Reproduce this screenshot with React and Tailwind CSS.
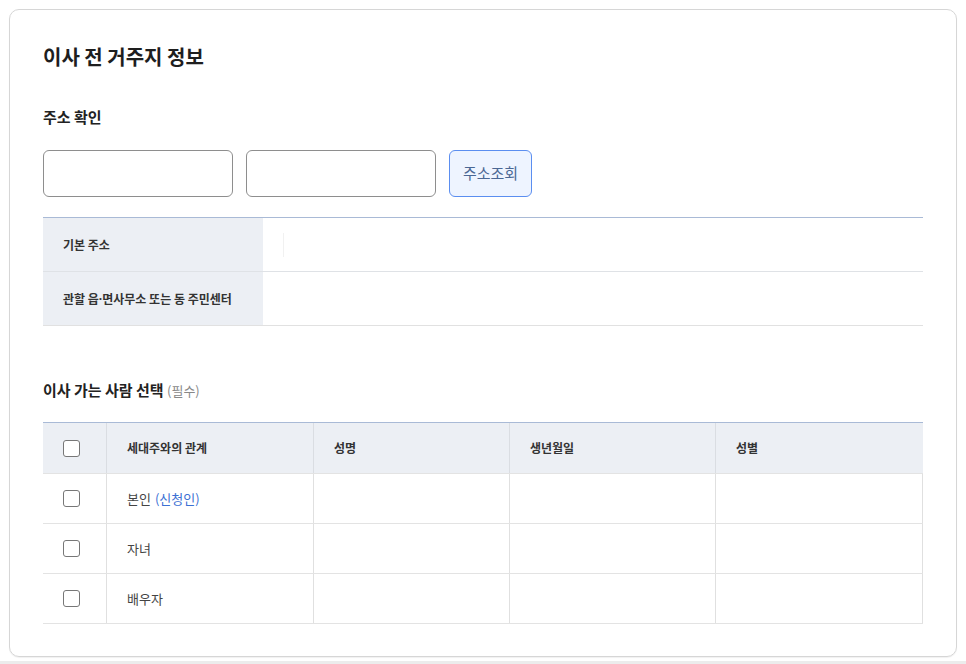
import React from 'react';

const font = { fontFamily: '"Noto Sans CJK KR", "Noto Sans", sans-serif' };

// Checkbox drawn as a plain box
const Box = () => (
  <span className="block w-[17px] h-[17px] rounded-[3px] border border-[#777] bg-white" />
);

const addressRows = [
  { label: <>관할 읍<span className="font-['Noto_Sans']">·</span>면사무소 또는 동 주민센터</>, key: 'office' },
];

const people = [
  { rel: '본인', note: '(신청인)' },
  { rel: '자녀' },
  { rel: '배우자' },
];

const cols = 'grid grid-cols-[63px_207px_196px_206px_1fr]';

export default function App() {
  return (
    <div className="bg-white min-h-[664px]" style={font}>
      <div className="p-[9px] pb-[4px]">
        <div className="border border-[#d6d6d6] rounded-[10px] px-[33px] pt-[33px] pb-[32px] shadow-[0_1px_1px_rgba(0,0,0,0.06)]">
          {/* Title */}
          <h2 className="text-[20px] leading-[28px] font-bold text-[#1e1e1e]">이사 전 거주지 정보</h2>

          {/* Address check */}
          <h3 className="mt-[35px] text-[15px] leading-[22px] font-bold text-[#222]">주소 확인</h3>
          <div className="mt-[22px] flex gap-[13px]">
            <div className="w-[190px] h-[47px] rounded-[6px] border border-[#8e8e8e] bg-white" />
            <div className="w-[190px] h-[47px] rounded-[6px] border border-[#8e8e8e] bg-white" />
            <button className="w-[83px] h-[47px] rounded-[6px] border border-[#5b8ef0] bg-[#eef4ff] text-[15px] text-[#4a6794]">
              주소조회
            </button>
          </div>

          <div className="mt-[20px] border-b border-[#e1e1e1]">
            <div className="flex h-[54px] border-t border-[#a9bad6]">
              <div className="w-[220px] shrink-0 bg-[#eceff4] flex items-center pl-[20px] text-[12px] font-bold text-[#333]">
                기본 주소
              </div>
              <div className="flex-1 flex items-center pl-[20px]">
                <span className="block w-px h-[24px] bg-[#f1f1f1]" />
              </div>
            </div>
            {addressRows.map((row) => (
              <div key={row.key} className="flex h-[54px] border-t border-[#dfe2e6]">
                <div className="w-[220px] shrink-0 bg-[#eceff4] flex items-center pl-[20px] text-[12px] font-bold text-[#333]">
                  {row.label}
                </div>
                <div className="flex-1" />
              </div>
            ))}
          </div>

          {/* People moving */}
          <h3 className="mt-[53px] text-[15px] leading-[22px] font-bold text-[#222]">
            이사 가는 사람 선택 <span className="text-[13px] font-normal text-[#888]">(필수)</span>
          </h3>

          <div className="mt-[20px] border-b border-[#e3e3e3]">
            <div className={`${cols} h-[51px] border-t border-[#a9bad6] bg-[#eceff4] text-[12px] font-bold text-[#333]`}>
              <div className="flex items-center pl-[20px]"><Box /></div>
              <div className="flex items-center pl-[20px] border-l border-[#dadde2]">세대주와의 관계</div>
              <div className="flex items-center pl-[20px] border-l border-[#dadde2]">성명</div>
              <div className="flex items-center pl-[20px] border-l border-[#dadde2]">생년월일</div>
              <div className="flex items-center pl-[20px] border-l border-[#dadde2]">성별</div>
            </div>
            {people.map((p) => (
              <div key={p.rel} className={`${cols} h-[50px] border-t border-[#e3e3e3] text-[13px] text-[#444]`}>
                <div className="flex items-center pl-[20px]"><Box /></div>
                <div className="flex items-center pl-[20px] border-l border-[#e0e0e0]">
                  {p.rel}
                  {p.note && <span className="ml-[4px] text-[#3b70d4]">{p.note}</span>}
                </div>
                <div className="border-l border-[#e0e0e0]" />
                <div className="border-l border-[#e0e0e0]" />
                <div className="border-l border-r border-[#e0e0e0]" />
              </div>
            ))}
          </div>
        </div>
      </div>
      <div className="h-[3px] bg-[#ececec]" />
    </div>
  );
}
